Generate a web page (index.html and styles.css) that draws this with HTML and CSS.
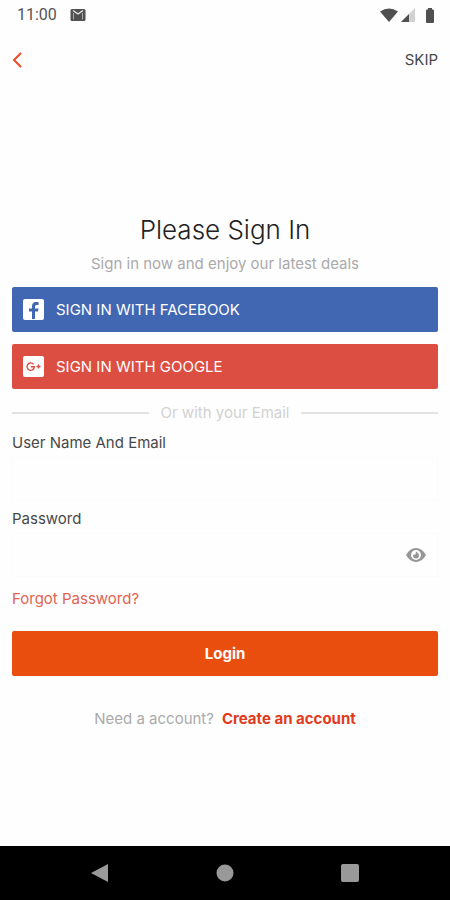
FILE: index.html
```html
<!DOCTYPE html>
<html lang="en">
<head>
<meta charset="utf-8">
<meta name="viewport" content="width=device-width, initial-scale=1">
<title>Please Sign In</title>
<link rel="stylesheet" href="styles.css">
</head>
<body>
<div class="status">
  <div class="status-group">
    <span class="clock">11:00</span>
    <svg width="16" height="12" viewBox="0 0 16 12" aria-hidden="true"><rect x="0.5" width="15" height="12" rx="1.5" fill="#505050"/><path d="M3 1.500L8 5L13 1.500" fill="none" stroke="#eee" stroke-width="1.300"/><path d="M3.500 4V10.500M12.500 4V10.500" fill="none" stroke="#aaa" stroke-width="1"/></svg>
  </div>
  <div class="status-group status-icons">
    <svg width="20" height="14" viewBox="0 0 20 14" aria-hidden="true"><path d="M1 3.500Q10-2.500 19 3.500L10 14Z" fill="#505050"/></svg>
    <svg width="14" height="14" viewBox="0 0 14 14" aria-hidden="true"><path d="M14 0V14H0Z" fill="#d2d2d2"/><path d="M8 6V14H0Z" fill="#505050"/></svg>
    <svg class="battery" width="10" height="15" viewBox="0 0 10 15" aria-hidden="true"><path d="M3 0H7V1.500H8Q9 1.500 9 2.500V14Q9 15 8 15H2Q1 15 1 14V2.500Q1 1.500 2 1.500H3Z" fill="#505050"/></svg>
  </div>
</div>
<header class="topbar">
  <button class="back" type="button" aria-label="Back"><svg width="10" height="16" viewBox="0 0 10 16" aria-hidden="true"><path d="M9 1L2 8L9 15" fill="none" stroke="#ea4d26" stroke-width="2"/></svg></button>
  <a class="skip" href="#">SKIP</a>
</header>
<main class="content">
  <h1 class="title">Please Sign In</h1>
  <p class="subtitle">Sign in now and enjoy our latest deals</p>
  <div class="social">
    <button class="button facebook" type="button">
      <svg width="21" height="21" viewBox="0 0 21 21" aria-hidden="true"><rect width="21" height="21" rx="2" fill="#fff"/><path d="M9 20V12.500H6V9.500H9V7.500Q9 3 13 3H15.500V6H13.500Q12 6 12 7.500V9.500H15.500L15 12.500H12V20Z" fill="#4267b2"/></svg>
      SIGN IN WITH FACEBOOK
    </button>
    <button class="button google" type="button">
      <svg width="21" height="21" viewBox="0 0 21 21" aria-hidden="true"><rect width="21" height="21" rx="2" fill="#fff"/><path d="M10.500 8.200A3.700 3.700 0 1 0 11.400 10.800H7.800M13.500 10.500H17.500M15.500 8.500V12.500" fill="none" stroke="#dc4e41" stroke-width="1.400"/></svg>
      SIGN IN WITH GOOGLE
    </button>
  </div>
  <div class="divider">Or with your Email</div>
  <form class="form">
    <label class="label" for="user">User Name And Email</label>
    <input class="input" id="user" type="text">
    <label class="label" for="password">Password</label>
    <div class="password">
      <input class="input" id="password" type="password">
      <button class="reveal" type="button" aria-label="Show password"><svg width="20" height="14" viewBox="0 0 20 14" aria-hidden="true"><path fill-rule="evenodd" d="M0 7Q4 0 10 0T20 7Q16 14 10 14T0 7ZM10 2A5 5 0 1 0 10 12A5 5 0 1 0 10 2Z" fill="#969696"/><path d="M10 3.500Q13 5 13 7.500A3 3 0 0 1 7 7.500Q8 6 9.500 6.500Z" fill="#969696"/></svg></button>
    </div>
    <a class="forgot" href="#">Forgot Password?</a>
    <button class="button login" type="submit">Login</button>
  </form>
  <p class="signup">Need a account? <a class="create" href="#">Create an account</a></p>
</main>
<nav class="navbar">
  <button class="nav-key" type="button" aria-label="Back"><svg width="20" height="20" viewBox="0 0 20 20" aria-hidden="true"><path d="M1 10L18 1V19Z" fill="#999"/></svg></button>
  <button class="nav-key" type="button" aria-label="Home"><svg width="20" height="20" viewBox="0 0 20 20" aria-hidden="true"><circle cx="10" cy="10" r="8.500" fill="#999"/></svg></button>
  <button class="nav-key" type="button" aria-label="Recent apps"><svg width="20" height="20" viewBox="0 0 20 20" aria-hidden="true"><rect x="1" y="1" width="18" height="18" rx="2" fill="#999"/></svg></button>
</nav>
</body>
</html>
```
FILE: styles.css
```css
* {
  box-sizing: border-box;
}

body {
  margin: 0;
  min-height: 100vh;
  display: flex;
  flex-direction: column;
  background: #fefefe;
  color: #484848;
  font: 15px/20px Inter, "Liberation Sans", sans-serif;
}

button,
input {
  font: inherit;
}

button {
  border: 0;
  padding: 0;
  background: none;
}

a {
  text-decoration: none;
}

svg {
  display: block;
  flex: none;
}

.status {
  height: 30px;
  padding: 0 15px 0 17px;
  display: flex;
  align-items: center;
  justify-content: space-between;
}

.status-group {
  display: flex;
  align-items: center;
  gap: 13px;
}

.status-icons {
  gap: 2px;
}

.battery {
  margin-left: 8px;
}

.clock {
  color: #555;
  font: 16px/20px Roboto, sans-serif;
}

.topbar {
  height: 60px;
  padding: 0 12px;
  display: flex;
  align-items: center;
  justify-content: space-between;
}

.skip {
  color: #484848;
}

.content {
  flex: 1;
  padding: 6px 12px 0;
  display: flex;
  flex-direction: column;
  justify-content: center;
}

.title {
  margin: 0 0 7px;
  color: #222;
  font-size: 26px;
  font-weight: 300;
  line-height: 34px;
  text-align: center;
}

.subtitle {
  margin: 0 0 13px;
  color: #aaa;
  text-align: center;
}

.social {
  display: grid;
  gap: 12px;
}

.button {
  height: 45px;
  padding: 0 11px;
  display: flex;
  align-items: center;
  gap: 12px;
  border-radius: 2px;
  color: #fff;
}

.facebook {
  background: #4267b2;
}

.google {
  background: #dc4e41;
}

.divider {
  margin: 14px 0 10px;
  display: flex;
  align-items: center;
  gap: 12px;
  color: #d2d2d2;
}

.divider::before,
.divider::after {
  content: "";
  flex: 1;
  height: 2px;
  background: #e2e2e2;
}

.form {
  display: flex;
  flex-direction: column;
}

.label {
  margin-bottom: 4px;
}

.input {
  width: 100%;
  height: 44px;
  margin-bottom: 8px;
  padding: 0 12px;
  border: 1px solid #fbfbfb;
  background: #fefefe;
  color: #484848;
}

.password {
  margin-bottom: 4px;
  position: relative;
}

.password .input {
  display: block;
  padding-right: 44px;
}

.reveal {
  position: absolute;
  top: 15px;
  right: 12px;
}

.forgot {
  align-self: flex-start;
  margin-bottom: 22px;
  color: #e46351;
}

.login {
  justify-content: center;
  background: #e94e0f;
  font-weight: 700;
}

.signup {
  margin: 33px 0 0;
  display: flex;
  justify-content: center;
  gap: 8px;
  color: #aaa;
}

.create {
  color: #e23a1c;
  font-weight: 700;
}

.navbar {
  height: 54px;
  padding: 0 38px;
  display: flex;
  align-items: center;
  justify-content: space-around;
  background: #000;
}
```
